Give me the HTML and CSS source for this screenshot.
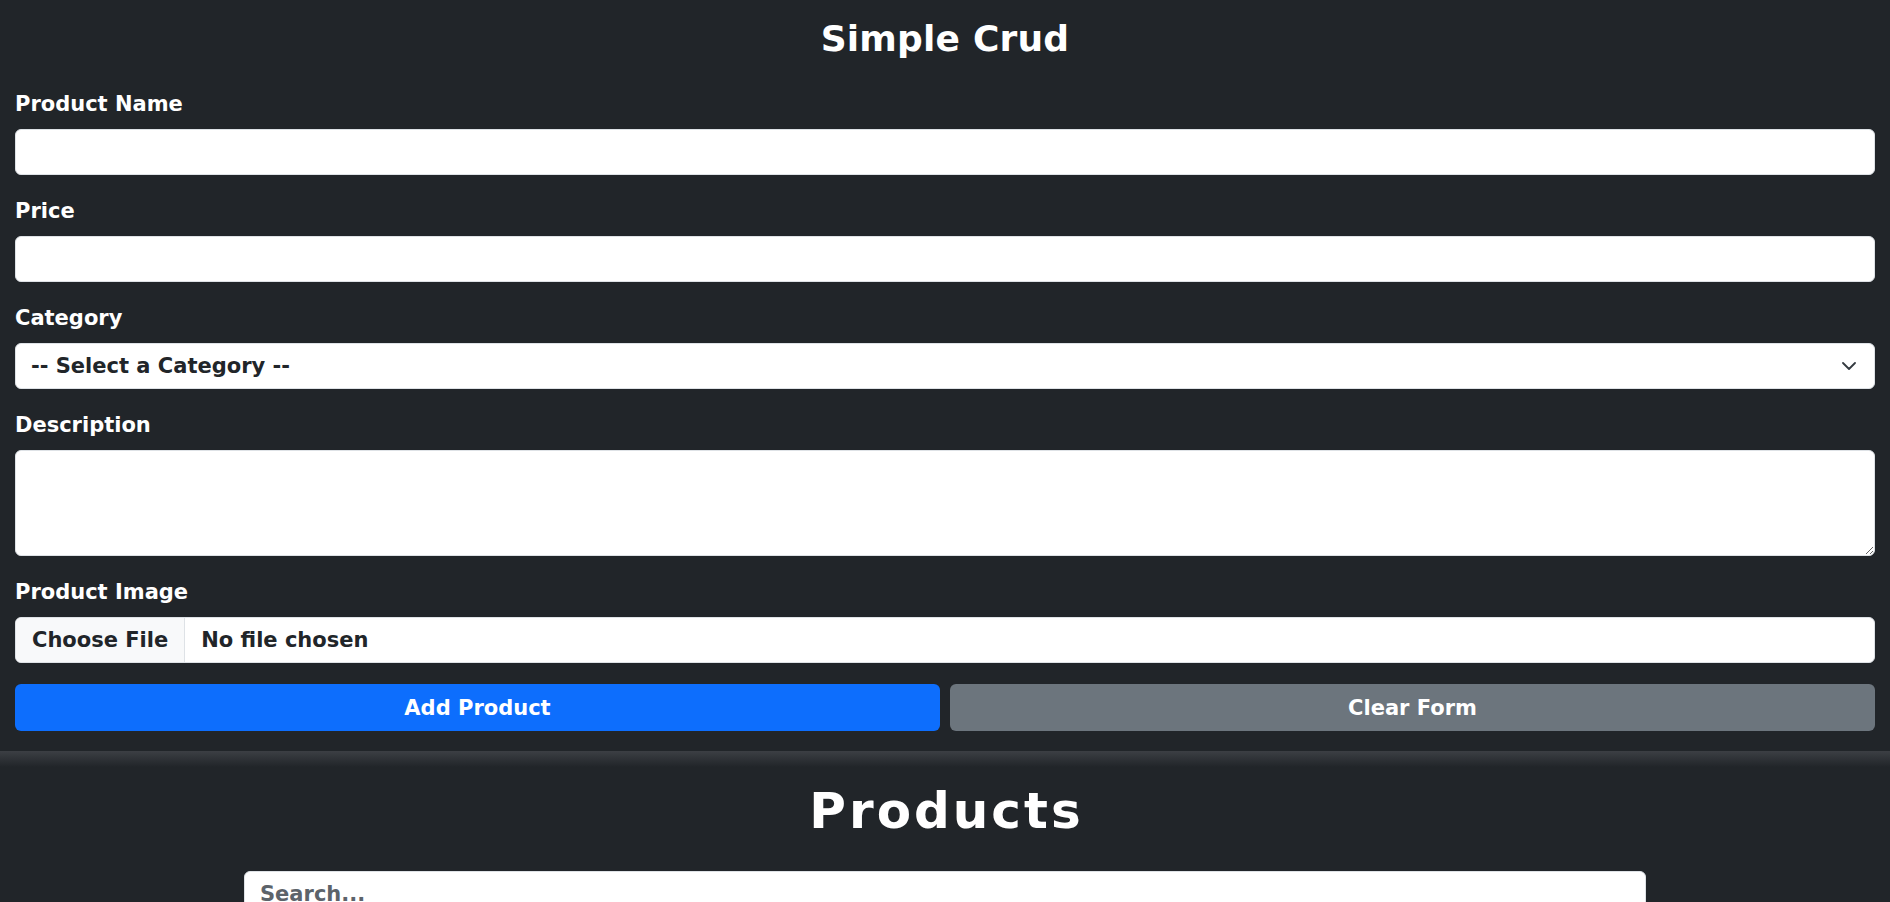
FILE: index.html
```html
<!DOCTYPE html>
<html lang="en">
<head>
<meta charset="utf-8">
<title>Simple Crud</title>
<link rel="stylesheet" href="styles.css">
</head>
<body>
<section class="form-section">
  <h1 class="title">Simple Crud</h1>
  <form class="form">
    <div class="field">
      <label class="label" for="name">Product Name</label>
      <input class="control" id="name" type="text">
    </div>
    <div class="field">
      <label class="label" for="price">Price</label>
      <input class="control" id="price" type="text">
    </div>
    <div class="field">
      <label class="label" for="cat">Category</label>
      <div class="select-wrap">
        <select class="control select" id="cat">
          <option>-- Select a Category --</option>
        </select>
        <svg class="chevron" width="14" height="8" viewBox="0 0 14 8"><path d="M1 1l6 6 6-6" fill="none" stroke="#343a40" stroke-width="1.8" stroke-linecap="round" stroke-linejoin="round"/></svg>
      </div>
    </div>
    <div class="field">
      <label class="label" for="desc">Description</label>
      <textarea class="control textarea" id="desc"></textarea>
    </div>
    <div class="field">
      <label class="label">Product Image</label>
      <div class="file">
        <span class="file-btn">Choose File</span>
        <span class="file-name">No file chosen</span>
      </div>
    </div>
    <div class="buttons">
      <button type="button" class="btn btn-primary">Add Product</button>
      <button type="button" class="btn btn-secondary">Clear Form</button>
    </div>
  </form>
</section>
<section class="list-section">
  <h2 class="list-title">Products</h2>
  <input class="control search" type="text" placeholder="Search...">
</section>
</body>
</html>
```
FILE: styles.css
```css
* { box-sizing: border-box; }
html, body {
  margin: 0;
  background: #212529;
}
body {
  font-family: "DejaVu Sans", sans-serif;
  font-weight: bold;
  color: #fff;
  font-size: 21px;
  letter-spacing: 0;
}
.form-section {
  padding: 17px 15px 20px;
}
.title {
  margin: 0 0 29px;
  text-align: center;
  font-size: 36px;
  line-height: 1.2;
  letter-spacing: 0.2px;
}
.form {
  display: flex;
  flex-direction: column;
  gap: 21px;
}
.field {
  display: flex;
  flex-direction: column;
  gap: 10px;
}
.label {
  line-height: 30px;
  color: #fff;
}
.control {
  display: block;
  width: 100%;
  height: 46px;
  margin: 0;
  padding: 0 15px;
  border: 1px solid #dee2e6;
  border-radius: 6px;
  background: #fff;
  color: #212529;
  font: inherit;
  letter-spacing: inherit;
  outline: none;
}
.select-wrap {
  position: relative;
}
.select {
  appearance: none;
  -webkit-appearance: none;
}
.chevron {
  position: absolute;
  right: 19px;
  top: 19px;
  pointer-events: none;
}
.textarea {
  height: 106px;
  padding: 8px 15px;
  resize: vertical;
}
.file {
  display: flex;
  align-items: stretch;
  height: 46px;
  border: 1px solid #dee2e6;
  border-radius: 6px;
  background: #fff;
  color: #212529;
  overflow: hidden;
  white-space: nowrap;
}
.file-btn {
  display: flex;
  align-items: center;
  flex-shrink: 0;
  padding: 0 16px;
  background: #f8f9fa;
  border-right: 1px solid #dee2e6;
}
.file-name {
  display: flex;
  align-items: center;
  padding-left: 16px;
}
.buttons {
  display: flex;
  gap: 10px;
}
.btn {
  flex: 1;
  height: 47px;
  border: none;
  border-radius: 6px;
  color: #fff;
  font: inherit;
  letter-spacing: inherit;
}
.btn-primary { background: #0d6efd; }
.btn-secondary { background: #6c757d; }
.list-section {
  background: linear-gradient(#3c3f44, #212529 16px);
  padding-top: 30px;
  padding-bottom: 40px;
  display: flex;
  flex-direction: column;
  align-items: center;
}
.list-title {
  margin: 0 0 30px;
  font-size: 50px;
  line-height: 1.2;
  letter-spacing: 3px;
  padding-left: 3px;
}
.search {
  width: 1402px;
}
.search::placeholder {
  color: #5c636a;
  opacity: 1;
}
```
